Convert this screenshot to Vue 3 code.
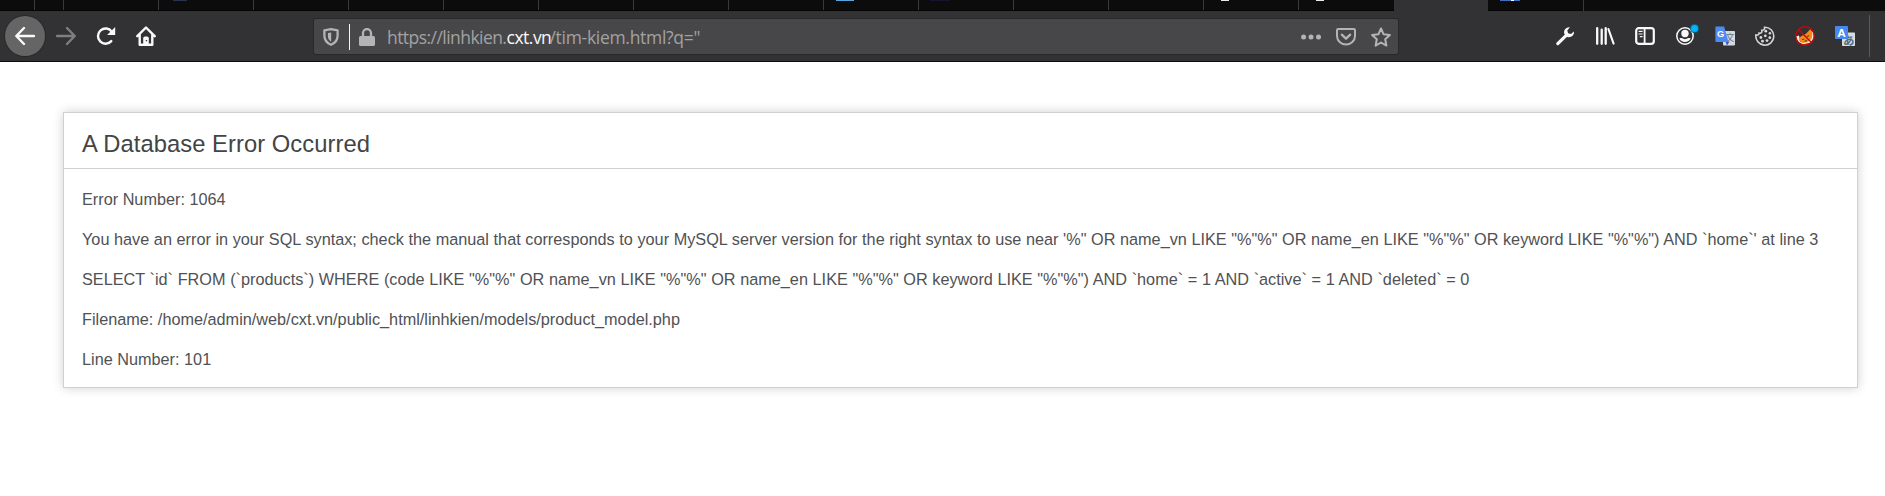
<script setup>
const tabs = [
  { w: 34, kind: 'plain' },
  { w: 29, kind: 'plain' },
  { w: 95, kind: 'plain' },
  { w: 95, kind: 'plain', mark: 'navy' },
  { w: 95, kind: 'plain' },
  { w: 95, kind: 'plain' },
  { w: 95, kind: 'plain' },
  { w: 95, kind: 'plain' },
  { w: 95, kind: 'plain' },
  { w: 95, kind: 'plain' },
  { w: 95, kind: 'plain', mark: 'sky' },
  { w: 95, kind: 'plain', mark: 'violet' },
  { w: 95, kind: 'plain' },
  { w: 95, kind: 'plain' },
  { w: 95, kind: 'plain', mark: 'white' },
  { w: 96, kind: 'last', mark: 'white' },
  { w: 94, kind: 'active' },
  { w: 95, kind: 'plain', mark: 'blue' },
]

const messages = [
  { text: 'Error Number: 1064' },
  {
    text: 'You have an error in your SQL syntax; check the manual that corresponds to your MySQL server version for the right syntax to use near \'%" OR name_vn LIKE "%"%" OR name_en LIKE "%"%" OR keyword LIKE "%"%") AND `home`\' at line 3',
    kind: 'message',
  },
  {
    text: 'SELECT `id` FROM (`products`) WHERE (code LIKE "%"%" OR name_vn LIKE "%"%" OR name_en LIKE "%"%" OR keyword LIKE "%"%") AND `home` = 1 AND `active` = 1 AND `deleted` = 0',
    kind: 'query',
  },
  { text: 'Filename: /home/admin/web/cxt.vn/public_html/linhkien/models/product_model.php' },
  { text: 'Line Number: 101' },
]
</script>

<template>
  <div class="page">
    <div class="tabs">
      <div v-for="(t, i) in tabs" :key="i" class="tab" :class="t.kind" :style="{ width: t.w + 'px' }">
        <i v-if="t.mark" class="mark" :class="t.mark"></i>
      </div>
    </div>

    <div class="toolbar">
      <div class="nav">
        <button class="back">
          <svg width="20" height="20" viewBox="0 0 20 20" class="line"><path d="M19 10H1.6M9 2 1.3 10 9 18" /></svg>
        </button>
        <svg class="line forward" width="20" height="20" viewBox="0 0 20 20"><path d="M1 10h17.4M11 2l7.7 8L11 18" /></svg>
        <svg class="line reload" width="20" height="20" viewBox="0 0 20 20">
          <path d="M15.3 15.1A7.6 7.6 0 1 1 15.7 5.6" />
          <path d="M19.2 1.1v8h-8.1Z" fill="#f9f9fa" stroke="none" />
        </svg>
        <svg class="line home" width="20" height="20" viewBox="0 0 20 20">
          <path d="M1.3 10.2 10 1.5l8.7 8.7M3.7 9v9.7h12.6V9" />
          <path d="M7.2 18.5v-6.2q0-1.8 1.8-1.8h2q1.8 0 1.8 1.8v6.2Z" fill="#f9f9fa" stroke="none" />
          <rect x="9.8" y="14" width="1.3" height="1.3" fill="#323234" stroke="none" />
        </svg>
      </div>

      <div class="urlbar">
        <svg class="shield" width="16" height="18" viewBox="0 0 16 18">
          <path d="M8 1.2 14.6 2.4v5.4c0 4.3-2.5 7.3-6.6 9-4.1-1.7-6.6-4.7-6.6-9V2.4Z" fill="none" stroke="#b4b4b5" stroke-width="2.3" stroke-linejoin="round" />
          <path d="M8.2 4.5v9.3C5.8 12.3 4.9 10.5 4.9 8V5.1Z" fill="#b4b4b5" />
        </svg>
        <i class="caret"></i>
        <svg class="lock" width="16" height="18" viewBox="0 0 16 18">
          <path d="M4 9V5.1a4 4 0 0 1 8 0V9" fill="none" stroke="#b4b4b5" stroke-width="2.3" />
          <rect x="0" y="8" width="16" height="10" rx="1.6" fill="#b4b4b5" />
        </svg>
        <div class="address"><span class="sub">https://linhkien.</span><span class="domain">cxt.vn</span><span class="path">/tim-kiem.html?q="</span></div>
        <div class="actions">
          <svg width="20" height="20" viewBox="0 0 20 20" fill="#b4b4b5"><circle cx="2.6" cy="10" r="2.5" /><circle cx="10" cy="10" r="2.5" /><circle cx="17.5" cy="10" r="2.5" /></svg>
          <svg width="20" height="20" viewBox="0 0 20 20" fill="none" stroke="#b4b4b5" stroke-width="2" stroke-linecap="round" stroke-linejoin="round">
            <path d="M2.3 2h15.4q1.3 0 1.3 1.3V9a9 8.5 0 0 1-18 0V3.3Q1 2 2.3 2Z" /><path d="m5.8 7.7 4.2 4 4.2-4" stroke-width="2.3" />
          </svg>
          <svg width="20" height="20" viewBox="0 0 20 20" fill="none" stroke="#b4b4b5" stroke-width="2" stroke-linejoin="round">
            <path d="m10 1.5 2.5 5.7 6.4.7-4.7 4.3 1.2 6.4L10 15.5l-5.4 3.1 1.2-6.4L1.1 7.9l6.4-.7Z" />
          </svg>
        </div>
      </div>

      <div class="extras">
        <svg viewBox="0 0 20 20">
          <path d="M2.8 17.6 11 9.6" stroke="#f9f9fa" stroke-width="3.2" stroke-linecap="round" />
          <path d="M14.9 1.3A5 5 0 0 0 9.4 8l2.9 2.9a5 5 0 0 0 6.6-5.5l-2.9 2.5-2.9-.6-.8-2.7Z" fill="#f9f9fa" />
        </svg>
        <svg viewBox="0 0 20 20" fill="none" stroke="#f9f9fa" stroke-width="2.3" stroke-linecap="round">
          <path d="M2.2 2.2v15.6M6.7 3.7v14.1M10.7 2.2v15.6" /><path d="m13.4 3 5.2 14.6" stroke-width="2.1" />
        </svg>
        <svg viewBox="0 0 20 20" fill="none" stroke="#f9f9fa" stroke-width="2.2">
          <rect x="1.2" y="2.2" width="17.6" height="15.6" rx="2.5" /><path d="M9.6 2v16" stroke-width="1.8" /><path d="M3.6 5.3h4M3.6 8h4M4.8 10.7h2.8" stroke-width="1.2" />
        </svg>
        <div class="account">
          <svg viewBox="0 0 20 20">
            <circle cx="10" cy="10" r="8.2" fill="none" stroke="#f9f9fa" stroke-width="1.5" />
            <circle cx="10" cy="7.5" r="3.7" fill="#f9f9fa" />
            <path d="M4.3 12.3q1.7-.5 2.5-.2a5.8 5.8 0 0 0 6.4 0q.8-.3 2.5.2a6.2 6.2 0 0 1-11.4 0Z" fill="#f9f9fa" />
          </svg>
          <i class="badge"></i>
        </div>
        <svg viewBox="0 0 20 20">
          <rect x="8" y="5" width="12" height="14.5" rx="1" fill="#d5d8dc" />
          <text x="10.6" y="15" class="cjk" font-size="9" fill="#607580">文</text>
          <path d="M10.5 15.5h4L12 19.5Z" fill="#3359bd" />
          <path d="M1.3.6h7.8l4.4 15.3H1.3Q.4 15.9.4 15V1.5Q.4.6 1.3.6Z" fill="#4c8bf5" />
          <text x="2" y="11.2" class="letter" font-size="9.2" font-weight="bold" fill="#fff">G</text>
        </svg>
        <svg viewBox="0 0 20 20">
          <path d="M10.5 1.2a9 9 0 1 0 8.6 7.8c-1.7.5-3-.3-3.2-1.9-2.1.5-3.2-.8-2.7-2.7-2 0-3-1.2-2.7-3.2Z" transform="matrix(-1 0 0 1 20 0)" fill="none" stroke="#d4d4d6" stroke-width="1.6" />
          <g fill="#d9d9dc"><circle cx="10.8" cy="5.2" r="1.4" /><circle cx="14.9" cy="7.2" r="1.3" /><circle cx="10.3" cy="9.8" r="1.4" /><circle cx="5.9" cy="11.5" r="1.4" /><circle cx="14.8" cy="11.7" r="1.4" /><circle cx="7.5" cy="15.2" r="1.4" /><circle cx="12" cy="14.6" r="1.4" /></g>
        </svg>
        <svg viewBox="0 0 20 20">
          <path d="M.8 10.5 4 9.5l1.5 7.3H3.5A9 9 0 0 1 .8 10.5ZM14.5 4.5 18.5 6l.3 6-3 4.5-8 2-3-2 8-3Z" fill="#f5f0e8" />
          <path d="M4.3 11.5 8 9.3l3-1.6L15.500 3l2 4.300-.7 5.200-4.100 3.800-5.200.7-3.300-2.300Z" fill="#f58a16" />
          <path d="m7 13.500 2.300-.3M12 10.500l2.200-1M9.500 15.500l2.400-1.300" stroke="#71400f" stroke-width="1.1" />
          <circle cx="10" cy="10" r="9.2" fill="none" stroke="#c3080e" stroke-width="1.4" />
          <path d="m3.500 3.500 13 13" stroke="#c3080e" stroke-width="1.4" />
        </svg>
        <svg viewBox="0 0 20 20">
          <rect x="7" y="6.5" width="13" height="13.5" rx=".8" fill="#d8dde0" />
          <text x="8" y="18.5" class="cjk" font-size="11.5" font-weight="bold" fill="#536c7d">あ</text>
          <rect x="0" y="0" width="13" height="13" rx=".8" fill="#4688f1" />
          <text x="2.3" y="10.5" class="letter" font-size="11.8" font-weight="bold" fill="#fff">A</text>
        </svg>
      </div>
      <i class="divider"></i>
    </div>

    <main class="container">
      <h1>A Database Error Occurred</h1>
      <p v-for="m in messages" :key="m.text" :class="m.kind">{{ m.text }}</p>
    </main>
  </div>
</template>

<style>
html {
  background: #fff;
}
body {
  margin: 0;
}
</style>

<style scoped>
.page {
  width: 1885px;
  height: 496px;
  background: #fff;
}
.tabs {
  display: flex;
  height: 11px;
  background: #0c0c0d;
  overflow: hidden;
}
.tab {
  box-sizing: border-box;
  flex: none;
  height: 11px;
  box-shadow: inset 0 -1px #050505, 1px 0 #3b3b3c;
}
.tab.last {
  box-shadow: inset 0 -1px #050505;
}
.tab.active {
  background: #323234;
  box-shadow: none;
}
.mark {
  display: block;
  height: 1px;
  width: 14px;
  margin-left: 15px;
}
.navy { background: #25364b; }
.sky { background: #55a7db; width: 18px; margin-left: 13px; }
.violet { background: #17132b; width: 20px; margin-left: 12px; }
.white { background: #e8e8e8; width: 8px; margin-left: 18px; }
.blue { background: linear-gradient(90deg, #426fc0 0 11px, #fff 11px 14px, #426fc0 14px); width: 20px; margin-left: 12px; }

.toolbar {
  box-sizing: border-box;
  display: flex;
  align-items: center;
  height: 51px;
  background: #323234;
  border-bottom: 1px solid #0c0c0d;
}
.nav {
  display: flex;
  align-items: center;
  width: 314px;
  padding-left: 5px;
  box-sizing: border-box;
}
.line {
  display: block;
  fill: none;
  stroke: #f9f9fa;
  stroke-width: 2.4;
  stroke-linecap: round;
  stroke-linejoin: round;
}
.back {
  display: flex;
  align-items: center;
  justify-content: center;
  width: 40px;
  height: 40px;
  padding: 0;
  border: 0;
  border-radius: 50%;
  background: #656566;
  box-shadow: 0 0 0 1px #29292a;
}
.forward {
  margin-left: 11px;
  stroke: #7f7f80;
}
.reload {
  margin-left: 20px;
}
.home {
  margin-left: 20px;
}
.urlbar {
  box-sizing: border-box;
  display: flex;
  align-items: center;
  width: 1084px;
  height: 35px;
  margin-top: 1px;
  padding: 0 7px 0 9px;
  border-radius: 2px;
  background: #474749;
  box-shadow: 0 0 0 1px #29292a;
}
.caret {
  width: 1px;
  height: 26px;
  margin: 0 9px 0 10px;
  background: #f4f4f4;
}
.shield,
.lock {
  flex: none;
}
.address {
  display: flex;
  margin-left: 12px;
  padding-top: 1px;
  font: 17.5px/24px "Open Sans", "Noto Sans", sans-serif;
  color: #a2a2a3;
  white-space: pre;
}
.sub {
  width: 119.5px;
  letter-spacing: -0.55px;
}
.domain {
  width: 43px;
  letter-spacing: -0.5px;
  color: #f9f9fa;
}
.path {
  letter-spacing: -0.3px;
}
.actions {
  display: flex;
  gap: 15px;
  margin-left: auto;
}
.extras {
  display: grid;
  grid-template-columns: repeat(8, 40px);
  justify-items: center;
  margin-left: 147px;
}
.extras svg {
  display: block;
  width: 20px;
  height: 20px;
}
.account {
  position: relative;
}
.badge {
  position: absolute;
  top: -1px;
  right: -3px;
  width: 7px;
  height: 7px;
  border-radius: 50%;
  background: #00b3ff;
  box-shadow: 0 0 0 1px #146385;
}
.letter {
  font-family: "Liberation Sans", sans-serif;
}
.cjk {
  font-family: "Noto Sans CJK JP", sans-serif;
}
.divider {
  width: 1px;
  height: 42px;
  margin-left: 4px;
  background: #5a5a5b;
}

.container {
  box-sizing: border-box;
  width: 1795px;
  height: 276px;
  margin: 50px 0 0 63px;
  border: 1px solid #d0d0d0;
  box-shadow: 0 0 10px #d0d0d0;
  font: 16.25px/20px "Liberation Sans", Arial, sans-serif;
  color: #4f5155;
}
h1 {
  box-sizing: border-box;
  height: 56px;
  margin: 0 0 20px;
  padding: 17px 18px 0;
  border-bottom: 1px solid #d0d0d0;
  font-size: 23.75px;
  line-height: 28px;
  letter-spacing: 0.06px;
  font-weight: normal;
  color: #444;
}
p {
  margin: 0 18px 20px;
  white-space: nowrap;
}
.message {
  word-spacing: 0.08px;
}
.query {
  word-spacing: 0.13px;
}
</style>
